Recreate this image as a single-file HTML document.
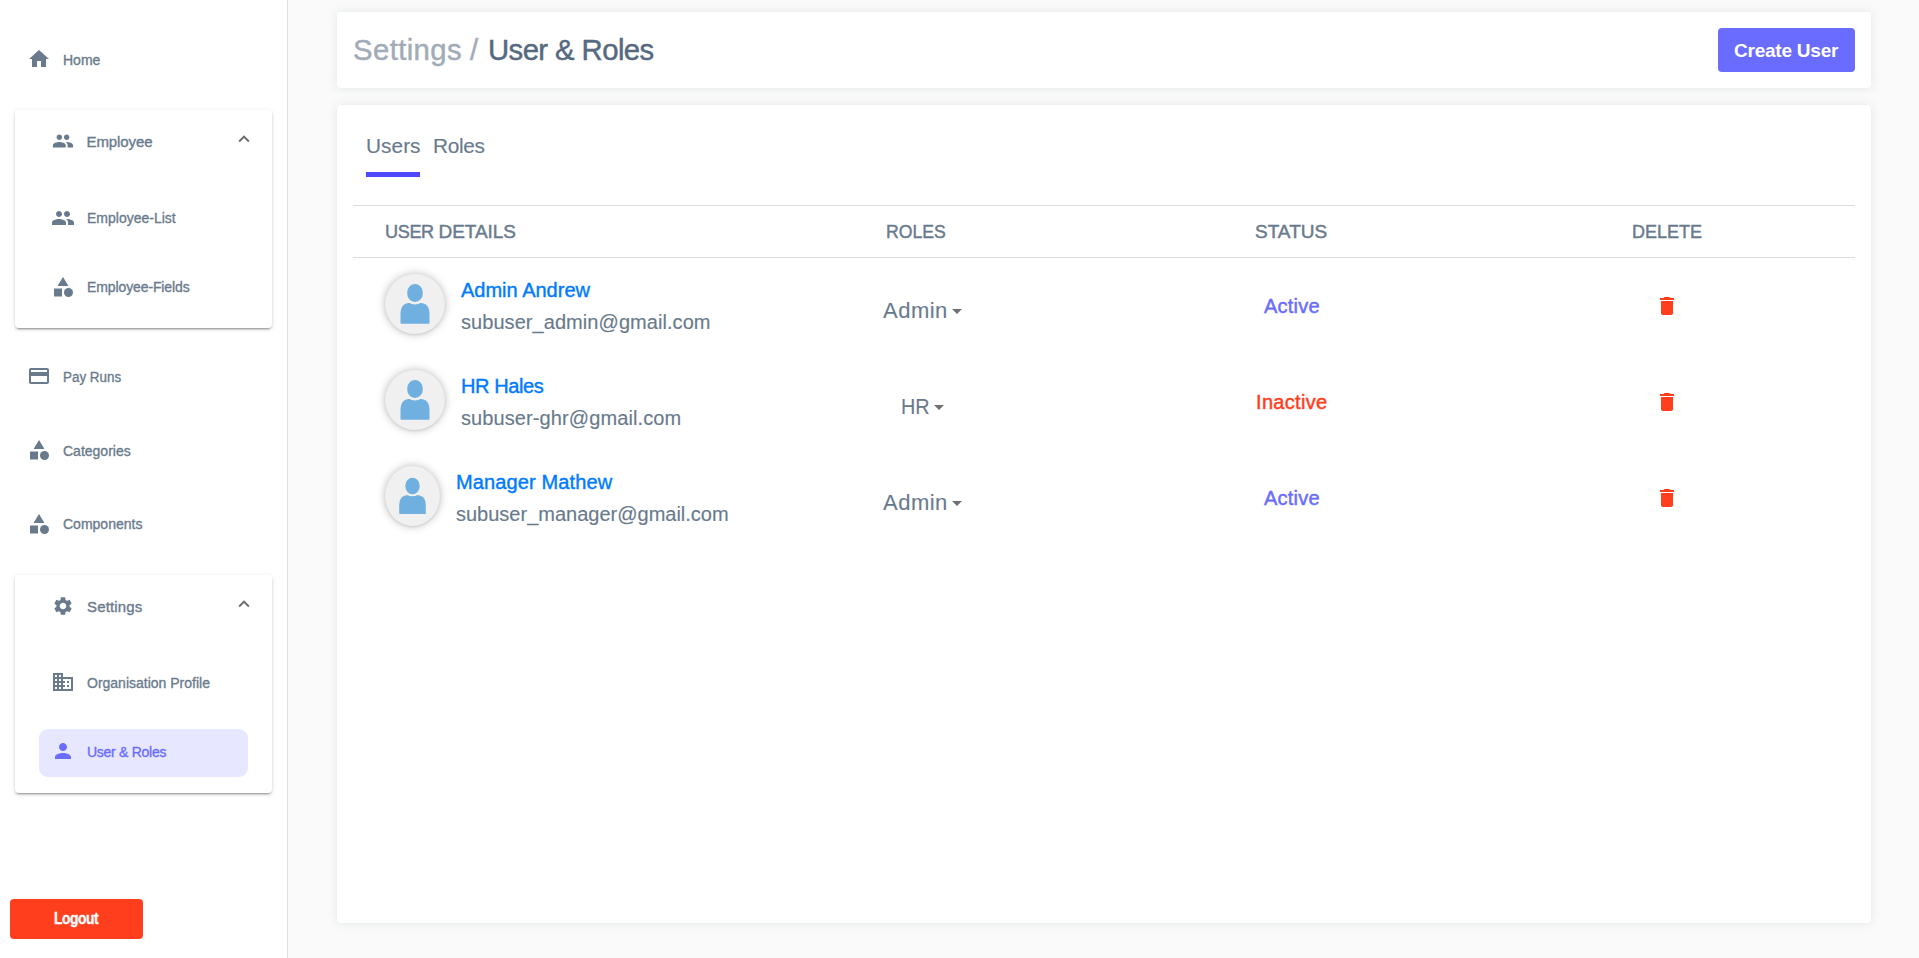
<!DOCTYPE html>
<html lang="en">
<head>
<meta charset="utf-8">
<title>Settings / User &amp; Roles</title>
<style>
*{box-sizing:border-box;margin:0;padding:0}
html,body{width:1919px;height:958px;overflow:hidden}
body{background:#fafafa;font-family:"Liberation Sans",sans-serif;color:#697a8d;position:relative}
.abs{position:absolute}
.t{position:absolute;white-space:nowrap;line-height:1}
#side{position:absolute;left:0;top:0;width:288px;height:958px;background:#fff;border-right:1px solid #e0e0e0}
.scard{position:absolute;left:15px;width:257px;background:#fff;border-radius:4px;
 box-shadow:0 3px 1px -2px rgba(0,0,0,.2),0 2px 2px 0 rgba(0,0,0,.14),0 1px 5px 0 rgba(0,0,0,.12)}
.ic{position:absolute;width:24px;height:24px;fill:#697a8d}
.nav{font-size:14px;color:#697a8d;-webkit-text-stroke:.33px #697a8d}
.navh{font-size:15px;color:#697a8d;-webkit-text-stroke:.35px #697a8d}
.mcard{position:absolute;left:337px;width:1534px;background:#fff;border-radius:4px;box-shadow:0 0 10px rgba(67,89,113,.13)}
.hline{position:absolute;left:353px;width:1502px;height:1px;background:#dedede}
.th{font-size:19px;transform-origin:0 0;color:#697a8d;-webkit-text-stroke:.45px #697a8d}
.name{font-size:20px;color:#007bff;-webkit-text-stroke:.4px #007bff}
.mail{font-size:20px;letter-spacing:.06px;color:#697a8d;-webkit-text-stroke:.15px #697a8d}
.role{font-size:22px;letter-spacing:.5px;color:#697a8d;-webkit-text-stroke:.1px #697a8d}
.caret{position:absolute;width:0;height:0;border-left:5px solid transparent;border-right:5px solid transparent;border-top:5px solid #707070}
.act{font-size:20px;letter-spacing:.22px;color:#696cff;-webkit-text-stroke:.45px #696cff}
.ina{font-size:20px;letter-spacing:.33px;color:#ff3e1d;-webkit-text-stroke:.45px #ff3e1d}
.av{position:absolute;height:60px;border-radius:50%;background:#f0f0f0;box-shadow:0 0 9px rgba(0,0,0,.27),0 1px 2px rgba(0,0,0,.08);overflow:hidden}
.av svg{position:absolute;left:0;top:0;width:100%;height:100%}
.del{position:absolute;width:24px;height:24px;fill:#ff3e1d}
</style>
</head>
<body>

<!-- SIDEBAR -->
<div id="side">
  <svg class="ic" style="left:27px;top:47px" viewBox="0 0 24 24"><path d="M10 20v-6h4v6h5v-8h3L12 3 2 12h3v8z"/></svg>
  <div id="sHome" class="t nav" style="left:63px;top:53px">Home</div>

  <div class="scard" style="top:110px;height:218px"></div>
  <svg class="ic" style="left:52px;top:130px;width:22px;height:22px" viewBox="0 0 24 24"><path d="M16 11c1.66 0 2.99-1.34 2.99-3S17.66 5 16 5c-1.66 0-3 1.34-3 3s1.34 3 3 3zm-8 0c1.66 0 2.99-1.34 2.99-3S9.66 5 8 5C6.34 5 5 6.34 5 8s1.34 3 3 3zm0 2c-2.33 0-7 1.17-7 3.5V19h14v-2.5c0-2.33-4.67-3.5-7-3.5zm8 0c-.29 0-.62.02-.97.05 1.16.84 1.97 1.97 1.97 3.45V19h6v-2.5c0-2.33-4.67-3.5-7-3.5z"/></svg>
  <div id="sEmp" class="t navh" style="letter-spacing:-.1px;left:86.500px;top:134px">Employee</div>
  <svg class="ic" style="left:233px;top:128px;width:22px;height:22px;fill:#6b6b6b" viewBox="0 0 24 24"><path d="M12 8l-6 6 1.41 1.41L12 10.83l4.59 4.58L18 14z"/></svg>

  <svg class="ic" style="left:51px;top:206px" viewBox="0 0 24 24"><path d="M16 11c1.66 0 2.99-1.34 2.99-3S17.66 5 16 5c-1.66 0-3 1.34-3 3s1.34 3 3 3zm-8 0c1.66 0 2.99-1.34 2.99-3S9.66 5 8 5C6.34 5 5 6.34 5 8s1.34 3 3 3zm0 2c-2.33 0-7 1.17-7 3.5V19h14v-2.5c0-2.33-4.67-3.5-7-3.5zm8 0c-.29 0-.62.02-.97.05 1.16.84 1.97 1.97 1.97 3.45V19h6v-2.5c0-2.33-4.67-3.5-7-3.5z"/></svg>
  <div id="sEL" class="t nav" style="left:87px;top:211px">Employee-List</div>

  <svg class="ic" style="left:51px;top:275px" viewBox="0 0 24 24"><path d="M12 2l-5.5 9h11z"/><circle cx="17.5" cy="17.5" r="4.5"/><path d="M3 13.5h8v8H3z"/></svg>
  <div id="sEF" class="t nav" style="letter-spacing:-.11px;left:87px;top:280px">Employee-Fields</div>

  <svg class="ic" style="left:27px;top:364px" viewBox="0 0 24 24"><path d="M20 4H4c-1.11 0-1.99.89-1.99 2L2 18c0 1.11.89 2 2 2h16c1.11 0 2-.89 2-2V6c0-1.11-.89-2-2-2zm0 14H4v-6h16v6zm0-10H4V6h16v2z"/></svg>
  <div id="sPR" class="t nav" style="transform-origin:0 0;transform:scaleX(.957);left:63px;top:370px">Pay Runs</div>

  <svg class="ic" style="left:27px;top:438px" viewBox="0 0 24 24"><path d="M12 2l-5.5 9h11z"/><circle cx="17.5" cy="17.5" r="4.5"/><path d="M3 13.5h8v8H3z"/></svg>
  <div id="sCat" class="t nav" style="left:63px;top:444px">Categories</div>

  <svg class="ic" style="left:27px;top:512px" viewBox="0 0 24 24"><path d="M12 2l-5.5 9h11z"/><circle cx="17.5" cy="17.5" r="4.5"/><path d="M3 13.5h8v8H3z"/></svg>
  <div id="sComp" class="t nav" style="left:63px;top:517px">Components</div>

  <div class="scard" style="top:575px;height:218px"></div>
  <svg class="ic" style="left:52px;top:595px;width:22px;height:22px" viewBox="0 0 24 24"><path d="M19.14 12.94c.04-.3.06-.61.06-.94 0-.32-.02-.64-.07-.94l2.03-1.58c.18-.14.23-.41.12-.61l-1.92-3.32c-.12-.22-.37-.29-.59-.22l-2.39.96c-.5-.38-1.03-.7-1.62-.94l-.36-2.54c-.04-.24-.24-.41-.48-.41h-3.84c-.24 0-.43.17-.47.41l-.36 2.54c-.59.24-1.13.57-1.62.94l-2.39-.96c-.22-.08-.47 0-.59.22L2.74 8.87c-.12.21-.08.47.12.61l2.03 1.58c-.05.3-.09.63-.09.94s.02.64.07.94l-2.03 1.58c-.18.14-.23.41-.12.61l1.92 3.32c.12.22.37.29.59.22l2.39-.96c.5.38 1.03.7 1.62.94l.36 2.54c.05.24.24.41.48.41h3.84c.24 0 .44-.17.47-.41l.36-2.54c.59-.24 1.13-.56 1.62-.94l2.39.96c.22.08.47 0 .59-.22l1.92-3.32c.12-.22.07-.47-.12-.61l-2.01-1.58zM12 15.6c-1.98 0-3.6-1.62-3.6-3.6s1.62-3.6 3.6-3.6 3.6 1.62 3.6 3.6-1.62 3.6-3.6 3.6z"/></svg>
  <div id="sSet" class="t navh" style="letter-spacing:.15px;left:87px;top:599px">Settings</div>
  <svg class="ic" style="left:233px;top:593px;width:22px;height:22px;fill:#6b6b6b" viewBox="0 0 24 24"><path d="M12 8l-6 6 1.41 1.41L12 10.83l4.59 4.58L18 14z"/></svg>

  <svg class="ic" style="left:51px;top:670px" viewBox="0 0 24 24"><path d="M12 7V3H2v18h20V7H12zM6 19H4v-2h2v2zm0-4H4v-2h2v2zm0-4H4V9h2v2zm0-4H4V5h2v2zm4 12H8v-2h2v2zm0-4H8v-2h2v2zm0-4H8V9h2v2zm0-4H8V5h2v2zm10 12h-8v-2h2v-2h-2v-2h2v-2h-2V9h8v10zm-2-8h-2v2h2v-2zm0 4h-2v2h2v-2z"/></svg>
  <div id="sOrg" class="t nav" style="left:87px;top:676px">Organisation Profile</div>

  <div class="abs" style="left:39px;top:729px;width:209px;height:48px;border-radius:9px;background:#e7e7ff"></div>
  <svg class="ic" style="left:51px;top:739px;fill:#696cff" viewBox="0 0 24 24"><path d="M12 12c2.21 0 4-1.79 4-4s-1.79-4-4-4-4 1.79-4 4 1.79 4 4 4zm0 2c-2.67 0-8 1.34-8 4v2h16v-2c0-2.66-5.33-4-8-4z"/></svg>
  <div id="sUR" class="t nav" style="letter-spacing:-.28px;left:87px;top:745px;color:#696cff;-webkit-text-stroke-color:#696cff">User &amp; Roles</div>

  <div class="abs" style="left:10px;top:899px;width:133px;height:40px;border-radius:4px;background:#ff3e1d"></div>
  <div id="sLog" class="t" style="left:54px;top:910.500px;font-size:16px;font-weight:700;color:#fff;-webkit-text-stroke:.35px #fff;letter-spacing:-.5px;transform-origin:0 0;transform:scaleX(.86)">Logout</div>
</div>

<!-- HEADER CARD -->
<div class="mcard" style="top:12px;height:76px"></div>
<div class="t" id="title1" style="letter-spacing:.4px;left:353px;top:35px;font-size:29.3px;color:#a1acb8;-webkit-text-stroke:.45px #a1acb8">Settings</div>
<div class="t" id="title2" style="left:470px;top:35px;font-size:29.3px;color:#a1acb8;-webkit-text-stroke:.45px #a1acb8">/</div>
<div class="t" id="title3" style="letter-spacing:-.58px;left:488px;top:35px;font-size:29.3px;color:#566a7f;-webkit-text-stroke:.45px #566a7f">User &amp; Roles</div>
<div class="abs" style="left:1718px;top:28px;width:137px;height:44px;border-radius:4px;background:#696cff"></div>
<div class="t" id="cu" style="left:1734px;top:41px;font-size:19px;letter-spacing:-.23px;font-weight:700;color:#fff">Create User</div>

<!-- MAIN CARD -->
<div class="mcard" style="top:105px;height:818px"></div>
<div class="t" id="tab1" style="-webkit-text-stroke:.15px #697a8d;left:366px;top:136px;font-size:20.8px;letter-spacing:.05px;color:#697a8d">Users</div>
<div class="t" id="tab2" style="-webkit-text-stroke:.15px #697a8d;left:433px;top:136px;font-size:20.8px;letter-spacing:-.3px;color:#697a8d">Roles</div>
<div class="abs" style="left:366px;top:172px;width:54px;height:5px;background:#5148fb"></div>

<div class="hline" style="top:205px"></div>
<div class="hline" style="top:257px"></div>
<div class="t th" id="th1" style="left:385px;top:222px;letter-spacing:-.42px;transform:scaleX(.954)">USER</div>
<div class="t th" id="th1b" style="left:438.500px;top:222px;letter-spacing:-.04px">DETAILS</div>
<div class="t th" id="th2" style="left:886px;top:222px;transform:scaleX(.93)">ROLES</div>
<div class="t th" id="th3" style="left:1255px;top:222px">STATUS</div>
<div class="t th" id="th4" style="left:1632px;top:222px;transform:scaleX(.947)">DELETE</div>

<!-- ROW 1 -->
<div class="av" style="left:385px;top:274px;width:60px"><svg viewBox="0 0 60 60" preserveAspectRatio="none"><path fill="#6fb0e0" d="M15.500 48.700V40.500C15.500 32.500 18.900 28.800 26 28.800H34C41.100 28.800 44.500 32.500 44.500 40.500V48.700Q44.500 49.700 43.500 49.700H16.500Q15.500 49.700 15.500 48.700Z"/><rect x="21" y="8.800" width="18" height="20.400" rx="9" ry="9.600" fill="#6fb0e0" stroke="#f0f0f0" stroke-width="2.400"/></svg></div>
<div class="t name" id="n1" style="left:461px;top:280px">Admin Andrew</div>
<div class="t mail" id="m1" style="left:461px;top:312px">subuser_admin@gmail.com</div>
<div class="t role" id="r1" style="left:883px;top:300px">Admin</div>
<div class="caret" style="left:952px;top:309px"></div>
<div class="t act" id="s1" style="left:1264px;top:296px">Active</div>
<svg class="del" style="left:1655px;top:294px" viewBox="0 0 24 24"><path d="M6 19c0 1.1.9 2 2 2h8c1.1 0 2-.9 2-2V7H6v12zM19 4h-3.500l-1-1h-5l-1 1H5v2h14V4z"/></svg>

<!-- ROW 2 -->
<div class="av" style="left:385px;top:370px;width:60px"><svg viewBox="0 0 60 60" preserveAspectRatio="none"><path fill="#6fb0e0" d="M15.500 48.700V40.500C15.500 32.500 18.900 28.800 26 28.800H34C41.100 28.800 44.500 32.500 44.500 40.500V48.700Q44.500 49.700 43.500 49.700H16.500Q15.500 49.700 15.500 48.700Z"/><rect x="21" y="8.800" width="18" height="20.400" rx="9" ry="9.600" fill="#6fb0e0" stroke="#f0f0f0" stroke-width="2.400"/></svg></div>
<div class="t name" id="n2" style="letter-spacing:-.4px;left:461px;top:376px">HR Hales</div>
<div class="t mail" id="m2" style="letter-spacing:.1px;left:461px;top:408px">subuser-ghr@gmail.com</div>
<div class="t role" id="r2" style="left:901px;top:396px;letter-spacing:0;transform-origin:0 0;transform:scaleX(.9)">HR</div>
<div class="caret" style="left:934px;top:405px"></div>
<div class="t ina" id="s2" style="left:1256px;top:392px">Inactive</div>
<svg class="del" style="left:1655px;top:390px" viewBox="0 0 24 24"><path d="M6 19c0 1.1.9 2 2 2h8c1.1 0 2-.9 2-2V7H6v12zM19 4h-3.500l-1-1h-5l-1 1H5v2h14V4z"/></svg>

<!-- ROW 3 -->
<div class="av" style="left:385px;top:466px;width:55px"><svg viewBox="0 0 60 60"><path fill="#6fb0e0" d="M15.500 48.700V40.500C15.500 32.500 18.900 28.800 26 28.800H34C41.100 28.800 44.500 32.500 44.500 40.500V48.700Q44.500 49.700 43.500 49.700H16.500Q15.500 49.700 15.500 48.700Z"/><rect x="21" y="8.800" width="18" height="20.400" rx="9" ry="9.600" fill="#6fb0e0" stroke="#f0f0f0" stroke-width="2.400"/></svg></div>
<div class="t name" id="n3" style="letter-spacing:.12px;left:456px;top:472px">Manager Mathew</div>
<div class="t mail" id="m3" style="letter-spacing:0;left:456px;top:504px">subuser_manager@gmail.com</div>
<div class="t role" id="r3" style="left:883px;top:492px">Admin</div>
<div class="caret" style="left:952px;top:501px"></div>
<div class="t act" id="s3" style="left:1264px;top:488px">Active</div>
<svg class="del" style="left:1655px;top:486px" viewBox="0 0 24 24"><path d="M6 19c0 1.1.9 2 2 2h8c1.1 0 2-.9 2-2V7H6v12zM19 4h-3.500l-1-1h-5l-1 1H5v2h14V4z"/></svg>

</body>
</html>
